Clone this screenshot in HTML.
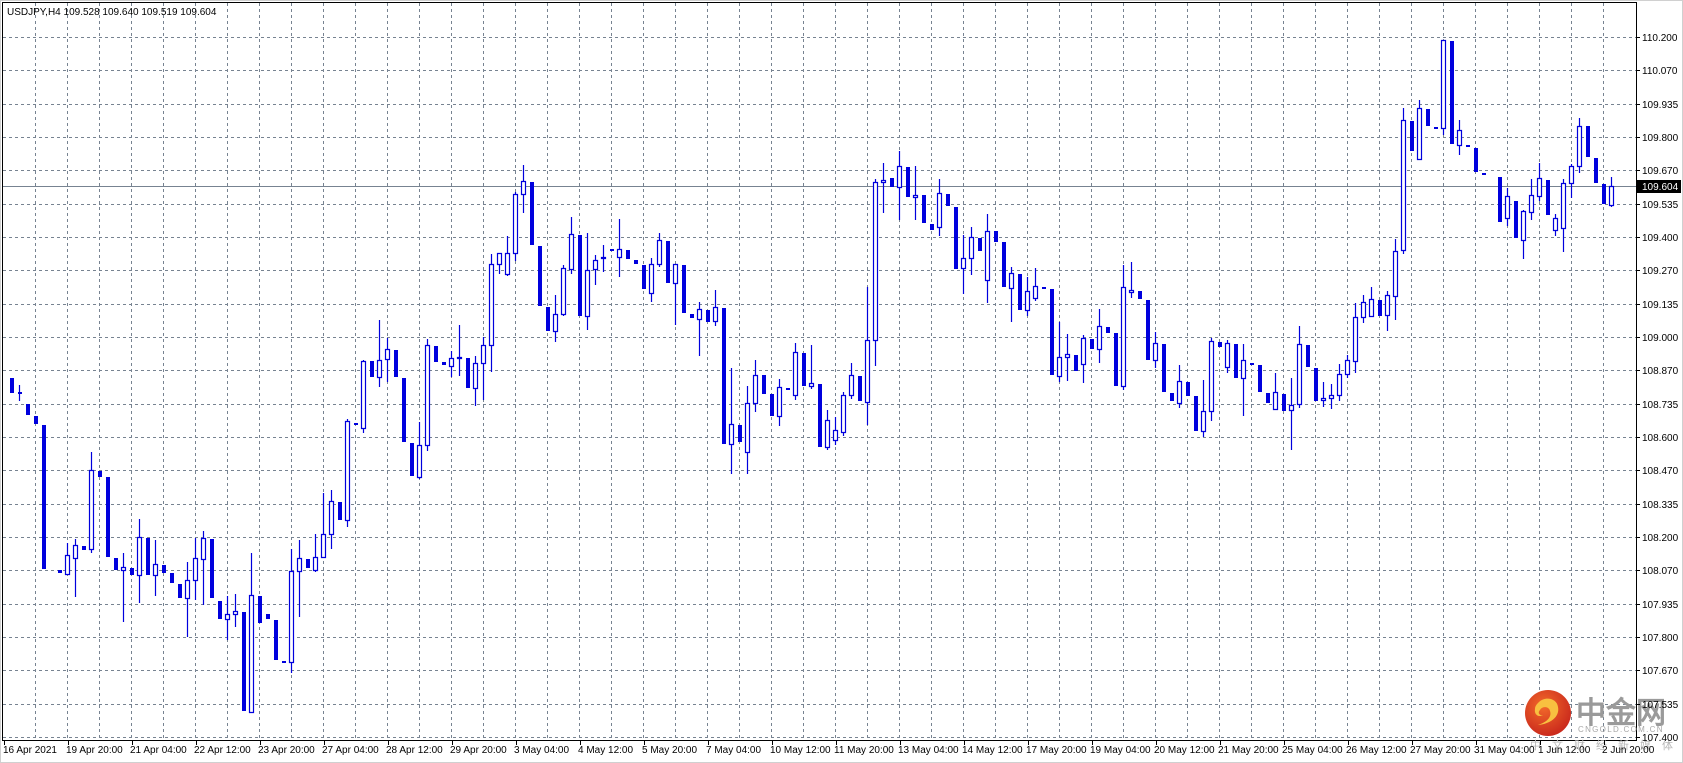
<!DOCTYPE html>
<html><head><meta charset="utf-8"><style>
html,body{margin:0;padding:0;background:#fff;width:1683px;height:763px;overflow:hidden}
svg{display:block}
text{font-family:"Liberation Sans",Arial,sans-serif}
</style></head><body>
<svg width="1683" height="763" viewBox="0 0 1683 763" xmlns="http://www.w3.org/2000/svg">
<rect x="0" y="0" width="1683" height="763" fill="#fff"/>
<rect x="0.5" y="0.5" width="1682" height="762" fill="none" stroke="#d0d0d0"/>
<g stroke="#778391" stroke-width="1" stroke-dasharray="3,3" fill="none">
<path d="M3 37.5H1636M3 70.5H1636M3 104.5H1636M3 137.5H1636M3 170.5H1636M3 204.5H1636M3 237.5H1636M3 270.5H1636M3 304.5H1636M3 337.5H1636M3 370.5H1636M3 404.5H1636M3 437.5H1636M3 470.5H1636M3 504.5H1636M3 537.5H1636M3 570.5H1636M3 604.5H1636M3 637.5H1636M3 670.5H1636M3 704.5H1636M3 737.5H1636"/>
<path d="M35.5 3V740M67.5 3V740M99.5 3V740M131.5 3V740M163.5 3V740M195.5 3V740M227.5 3V740M259.5 3V740M291.5 3V740M323.5 3V740M355.5 3V740M387.5 3V740M419.5 3V740M451.5 3V740M483.5 3V740M515.5 3V740M547.5 3V740M579.5 3V740M611.5 3V740M643.5 3V740M675.5 3V740M707.5 3V740M739.5 3V740M771.5 3V740M803.5 3V740M835.5 3V740M867.5 3V740M899.5 3V740M931.5 3V740M963.5 3V740M995.5 3V740M1027.5 3V740M1059.5 3V740M1091.5 3V740M1123.5 3V740M1155.5 3V740M1187.5 3V740M1219.5 3V740M1251.5 3V740M1283.5 3V740M1315.5 3V740M1347.5 3V740M1379.5 3V740M1411.5 3V740M1443.5 3V740M1475.5 3V740M1507.5 3V740M1539.5 3V740M1571.5 3V740M1603.5 3V740"/>
</g>
<path d="M3 186.5H1636" stroke="#778391" stroke-width="1"/>
<path d="M2.5 2V740.5M2 2.5H1636.5M1636.5 2V741M2 740.5H1637" stroke="#000" stroke-width="1" fill="none"/>
<!-- watermark -->
<defs><radialGradient id="g" cx="40%" cy="35%" r="70%"><stop offset="0" stop-color="#f26a2a"/><stop offset="1" stop-color="#c8261c"/></radialGradient></defs>
<circle cx="1548" cy="713" r="23" fill="url(#g)"/>
<path d="M1539 702c6-6 18-4 19 5c2 10-8 17-20 18c9-3 14-8 12-14c-1-5-8-5-10-1c-3 3 0 6 3 5c-5 3-9-1-8-6c0-3 2-5 4-7z" fill="#f8c040"/>
<text x="1576" y="723" font-size="30" font-weight="bold" fill="#9a9a9a" font-family="Noto Sans CJK SC,sans-serif">中金网</text>
<text x="1578" y="732" font-size="8" fill="#a8a8a8" letter-spacing="1.3">CNGOLD.COM.CN</text>
<text x="1530" y="749" font-size="11" fill="#b8b8b8" font-family="Noto Sans CJK SC,sans-serif" letter-spacing="11">中文财经新媒体</text>
<!-- candles -->
<g fill="none" stroke="#0000dd" stroke-width="1.2">
<path d="M19.5 385V401M67.5 543V575M75.5 539V597M91.5 452V553M123.5 553V622M139.5 519V603M155.5 540V596M187.5 562V637M195.5 538V600M203.5 531V605M227.5 596V640M235.5 594V627M251.5 553V713M291.5 549V673M299.5 540V617M315.5 534V572M323.5 493V557M331.5 490V549M347.5 419V527M363.5 360V433M379.5 320V387M387.5 338V382M419.5 422V479M427.5 339V451M451.5 351V377M459.5 325V376M475.5 356V406M483.5 337V400M491.5 254V372M499.5 253V274M507.5 236V276M515.5 192V261M523.5 165V213M555.5 295V342M563.5 265V316M571.5 217V274M587.5 233V330M595.5 255V285M603.5 245V272M619.5 219V277M651.5 258V302M659.5 233V267M675.5 264V325M699.5 302V356M715.5 290V326M731.5 368V474M747.5 386V474M755.5 360V412M779.5 379V426M795.5 343V400M811.5 345V389M827.5 410V450M835.5 417V445M843.5 392V436M851.5 363V399M867.5 287V425M875.5 179V366M883.5 163V213M899.5 151V220M915.5 166V220M939.5 179V236M963.5 235V294M971.5 227V275M987.5 214V303M1011.5 267V322M1027.5 277V316M1035.5 268V301M1059.5 322V382M1067.5 334V381M1083.5 335V383M1099.5 309V363M1123.5 265V390M1131.5 262V298M1155.5 332V368M1179.5 365V408M1203.5 380V437M1211.5 338V421M1227.5 340V373M1243.5 344V416M1275.5 373V409M1291.5 378V450M1299.5 326V408M1323.5 382V407M1331.5 384V409M1339.5 364V401M1347.5 355V378M1355.5 303V373M1363.5 295V323M1371.5 287V316M1387.5 291V331M1395.5 239V320M1403.5 108V254M1419.5 100V159M1443.5 40V135M1459.5 120V155M1507.5 188V226M1523.5 210V259M1531.5 179V220M1539.5 163V201M1555.5 214V236M1563.5 179V252M1571.5 164V198M1579.5 118V173M1611.5 177V207"/>
</g>
<path fill="#0000dd" d="M10 378h4v15h-4zM18 392h4v2h-4zM26 404h4v11h-4zM34 416h4v8h-4zM42 425h4v144h-4zM58 570h4v3h-4zM82 546h4v4h-4zM98 471h4v6h-4zM106 477h4v80h-4zM114 558h4v12h-4zM130 568h4v7h-4zM146 538h4v37h-4zM162 565h4v8h-4zM170 573h4v10h-4zM178 584h4v14h-4zM210 539h4v59h-4zM218 601h4v18h-4zM242 612h4v99h-4zM258 596h4v27h-4zM266 614h4v5h-4zM274 620h4v40h-4zM282 661h4v2h-4zM306 559h4v9h-4zM338 502h4v18h-4zM354 423h4v2h-4zM370 361h4v16h-4zM394 350h4v27h-4zM402 378h4v64h-4zM410 443h4v33h-4zM434 346h4v16h-4zM442 362h4v3h-4zM466 358h4v30h-4zM530 182h4v63h-4zM538 246h4v60h-4zM546 307h4v24h-4zM578 235h4v81h-4zM610 249h4v2h-4zM626 250h4v9h-4zM634 260h4v4h-4zM642 265h4v24h-4zM666 241h4v42h-4zM682 265h4v48h-4zM690 314h4v4h-4zM706 310h4v12h-4zM722 308h4v136h-4zM738 425h4v17h-4zM762 375h4v19h-4zM770 394h4v22h-4zM786 388h4v2h-4zM802 353h4v33h-4zM818 384h4v63h-4zM858 376h4v25h-4zM890 178h4v9h-4zM906 167h4v30h-4zM922 195h4v28h-4zM930 224h4v6h-4zM946 194h4v12h-4zM954 207h4v62h-4zM978 238h4v13h-4zM994 231h4v11h-4zM1002 242h4v45h-4zM1018 274h4v36h-4zM1042 287h4v2h-4zM1050 289h4v86h-4zM1074 355h4v16h-4zM1090 339h4v10h-4zM1106 327h4v6h-4zM1114 333h4v53h-4zM1138 291h4v8h-4zM1146 300h4v60h-4zM1162 344h4v48h-4zM1170 393h4v8h-4zM1186 382h4v14h-4zM1194 396h4v35h-4zM1218 342h4v5h-4zM1234 344h4v34h-4zM1250 363h4v2h-4zM1258 365h4v27h-4zM1266 393h4v10h-4zM1282 394h4v17h-4zM1306 345h4v22h-4zM1314 368h4v33h-4zM1378 300h4v16h-4zM1410 121h4v30h-4zM1426 109h4v17h-4zM1434 127h4v2h-4zM1450 41h4v103h-4zM1466 145h4v2h-4zM1474 148h4v24h-4zM1482 173h4v2h-4zM1498 177h4v45h-4zM1514 201h4v37h-4zM1546 180h4v35h-4zM1586 126h4v31h-4zM1594 158h4v25h-4zM1602 184h4v20h-4z"/>
<path fill="#fff" stroke="#0000dd" stroke-width="1.2" d="M65.5 555.5h4v19h-4zM73.5 545.5h4v13h-4zM89.5 470.5h4v79h-4zM121.5 567.5h4v3h-4zM137.5 537.5h4v38h-4zM153.5 564.5h4v11h-4zM185.5 580.5h4v18h-4zM193.5 558.5h4v22h-4zM201.5 538.5h4v21h-4zM225.5 614.5h4v5h-4zM233.5 611.5h4v3h-4zM249.5 595.5h4v117h-4zM289.5 571.5h4v91h-4zM297.5 558.5h4v13h-4zM313.5 557.5h4v13h-4zM321.5 534.5h4v23h-4zM329.5 501.5h4v33h-4zM345.5 421.5h4v99h-4zM361.5 361.5h4v67h-4zM377.5 360.5h4v17h-4zM385.5 349.5h4v10h-4zM417.5 445.5h4v32h-4zM425.5 345.5h4v100h-4zM449.5 358.5h4v8h-4zM457.5 357.5h4v1h-4zM473.5 363.5h4v25h-4zM481.5 345.5h4v18h-4zM489.5 264.5h4v81h-4zM497.5 253.5h4v11h-4zM505.5 253.5h4v21h-4zM513.5 194.5h4v59h-4zM521.5 181.5h4v13h-4zM553.5 314.5h4v17h-4zM561.5 268.5h4v46h-4zM569.5 234.5h4v35h-4zM585.5 270.5h4v46h-4zM593.5 260.5h4v9h-4zM601.5 257.5h4v1h-4zM617.5 249.5h4v8h-4zM649.5 264.5h4v29h-4zM657.5 240.5h4v24h-4zM673.5 264.5h4v19h-4zM697.5 309.5h4v10h-4zM713.5 307.5h4v14h-4zM729.5 424.5h4v20h-4zM745.5 403.5h4v49h-4zM753.5 375.5h4v28h-4zM777.5 387.5h4v29h-4zM793.5 352.5h4v43h-4zM809.5 383.5h4v3h-4zM825.5 420.5h4v27h-4zM833.5 430.5h4v10h-4zM841.5 395.5h4v37h-4zM849.5 375.5h4v20h-4zM865.5 340.5h4v62h-4zM873.5 182.5h4v158h-4zM881.5 180.5h4v2h-4zM897.5 166.5h4v21h-4zM913.5 195.5h4v2h-4zM937.5 193.5h4v34h-4zM961.5 258.5h4v10h-4zM969.5 237.5h4v21h-4zM985.5 231.5h4v49h-4zM1009.5 273.5h4v15h-4zM1025.5 291.5h4v19h-4zM1033.5 286.5h4v12h-4zM1057.5 357.5h4v19h-4zM1065.5 354.5h4v3h-4zM1081.5 338.5h4v26h-4zM1097.5 326.5h4v23h-4zM1121.5 287.5h4v99h-4zM1129.5 290.5h4v2h-4zM1153.5 343.5h4v17h-4zM1177.5 381.5h4v22h-4zM1201.5 411.5h4v20h-4zM1209.5 341.5h4v70h-4zM1225.5 343.5h4v24h-4zM1241.5 360.5h4v18h-4zM1273.5 392.5h4v17h-4zM1289.5 405.5h4v5h-4zM1297.5 344.5h4v60h-4zM1321.5 398.5h4v2h-4zM1329.5 395.5h4v3h-4zM1337.5 374.5h4v21h-4zM1345.5 360.5h4v14h-4zM1353.5 317.5h4v44h-4zM1361.5 302.5h4v15h-4zM1369.5 299.5h4v17h-4zM1385.5 295.5h4v20h-4zM1393.5 251.5h4v45h-4zM1401.5 120.5h4v130h-4zM1417.5 108.5h4v51h-4zM1441.5 40.5h4v88h-4zM1457.5 130.5h4v15h-4zM1505.5 196.5h4v22h-4zM1521.5 211.5h4v29h-4zM1529.5 195.5h4v17h-4zM1537.5 178.5h4v18h-4zM1553.5 218.5h4v12h-4zM1561.5 183.5h4v45h-4zM1569.5 166.5h4v17h-4zM1577.5 126.5h4v40h-4zM1609.5 186.5h4v19h-4z"/>
<text x="7" y="15" font-size="10" fill="#000">USDJPY,H4  109.528 109.640 109.519 109.604</text>
<path stroke="#000" d="M1636 37.5h4M1636 70.5h4M1636 104.5h4M1636 137.5h4M1636 170.5h4M1636 204.5h4M1636 237.5h4M1636 270.5h4M1636 304.5h4M1636 337.5h4M1636 370.5h4M1636 404.5h4M1636 437.5h4M1636 470.5h4M1636 504.5h4M1636 537.5h4M1636 570.5h4M1636 604.5h4M1636 637.5h4M1636 670.5h4M1636 704.5h4M1636 737.5h4"/>
<g font-size="10" fill="#000">
<text x="1642" y="41">110.200</text><text x="1642" y="74">110.070</text><text x="1642" y="108">109.935</text><text x="1642" y="141">109.800</text><text x="1642" y="174">109.670</text><text x="1642" y="208">109.535</text><text x="1642" y="241">109.400</text><text x="1642" y="274">109.270</text><text x="1642" y="308">109.135</text><text x="1642" y="341">109.000</text><text x="1642" y="374">108.870</text><text x="1642" y="408">108.735</text><text x="1642" y="441">108.600</text><text x="1642" y="474">108.470</text><text x="1642" y="508">108.335</text><text x="1642" y="541">108.200</text><text x="1642" y="574">108.070</text><text x="1642" y="608">107.935</text><text x="1642" y="641">107.800</text><text x="1642" y="674">107.670</text><text x="1642" y="708">107.535</text><text x="1642" y="741">107.400</text>
</g>
<rect x="1637" y="180" width="44" height="13" fill="#000"/>
<text x="1642" y="190" font-size="10" fill="#fff">109.604</text>
<path stroke="#000" d="M4.5 740v5M68.5 740v5M132.5 740v5M196.5 740v5M260.5 740v5M324.5 740v5M388.5 740v5M452.5 740v5M516.5 740v5M580.5 740v5M644.5 740v5M708.5 740v5M772.5 740v5M836.5 740v5M900.5 740v5M964.5 740v5M1028.5 740v5M1092.5 740v5M1156.5 740v5M1220.5 740v5M1284.5 740v5M1348.5 740v5M1412.5 740v5M1476.5 740v5M1540.5 740v5M1604.5 740v5"/>
<g font-size="10" fill="#000">
<text x="3" y="753">16 Apr 2021</text><text x="66" y="753">19 Apr 20:00</text><text x="130" y="753">21 Apr 04:00</text><text x="194" y="753">22 Apr 12:00</text><text x="258" y="753">23 Apr 20:00</text><text x="322" y="753">27 Apr 04:00</text><text x="386" y="753">28 Apr 12:00</text><text x="450" y="753">29 Apr 20:00</text><text x="514" y="753">3 May 04:00</text><text x="578" y="753">4 May 12:00</text><text x="642" y="753">5 May 20:00</text><text x="706" y="753">7 May 04:00</text><text x="770" y="753">10 May 12:00</text><text x="834" y="753">11 May 20:00</text><text x="898" y="753">13 May 04:00</text><text x="962" y="753">14 May 12:00</text><text x="1026" y="753">17 May 20:00</text><text x="1090" y="753">19 May 04:00</text><text x="1154" y="753">20 May 12:00</text><text x="1218" y="753">21 May 20:00</text><text x="1282" y="753">25 May 04:00</text><text x="1346" y="753">26 May 12:00</text><text x="1410" y="753">27 May 20:00</text><text x="1474" y="753">31 May 04:00</text><text x="1538" y="753">1 Jun 12:00</text><text x="1602" y="753">2 Jun 20:00</text>
</g>
</svg>
</body></html>
